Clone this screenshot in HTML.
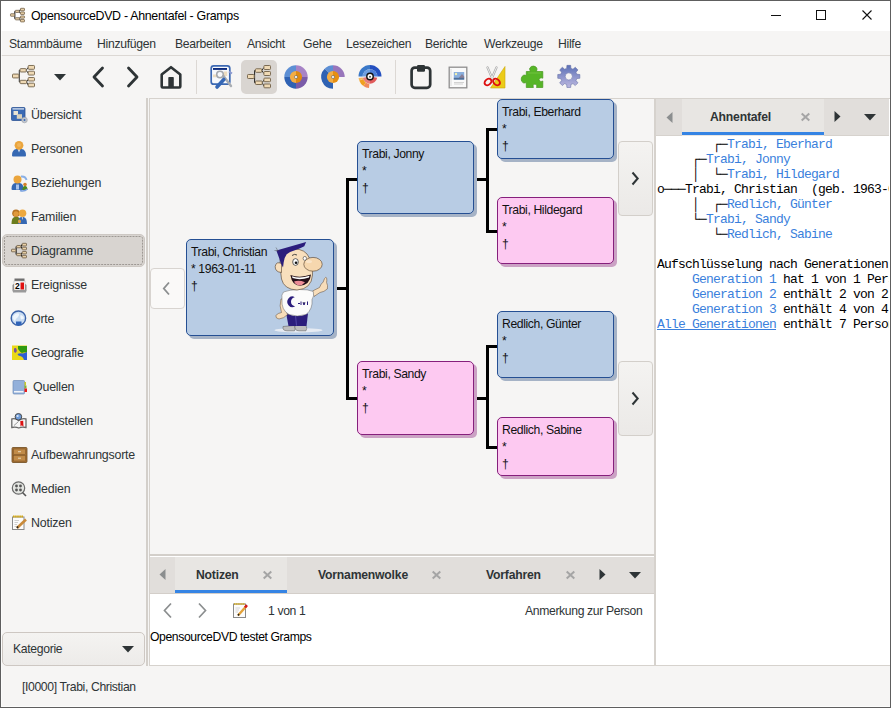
<!DOCTYPE html>
<html><head><meta charset="utf-8">
<style>
*{margin:0;padding:0;box-sizing:border-box}
html,body{width:891px;height:708px;overflow:hidden;background:#f6f5f4}
body{position:relative;font-family:"Liberation Sans",sans-serif;font-size:11.6px;color:#2e3436}
.a{position:absolute}
.t{position:absolute;white-space:pre;line-height:14px}
.hl{position:absolute;height:1px;background:#cdc7c2}
.vl{position:absolute;width:1px;background:#cdc7c2}
svg{position:absolute;overflow:visible}
.box{position:absolute;border-radius:5px;border:1.3px solid #254f93;background:#b8cce4;box-shadow:3px 3px 0 #a6b3c6}
.box.f{border-color:#861f7c;background:#fdc9f1;box-shadow:3px 3px 0 #cba2c4}
.box .t{color:#111;font-size:12.2px;letter-spacing:-0.38px;left:4px}
.mono{position:absolute;font-family:"Liberation Mono",monospace;font-size:13px;letter-spacing:-0.8px;white-space:pre;line-height:15px;color:#000;overflow:hidden}
.lk{color:#3a7fdc}
</style></head><body>
<!-- title bar -->
<div class="a" style="left:0;top:0;width:891px;height:31px;background:#fff"></div>
<div class="t" style="left:31px;top:9px;font-size:12.4px;letter-spacing:-0.3px;color:#000">OpensourceDVD - Ahnentafel - Gramps</div>
<!-- window controls -->
<div class="a" style="left:771px;top:15px;width:10px;height:1px;background:#111"></div>
<div class="a" style="left:816px;top:10px;width:10px;height:10px;border:1px solid #111"></div>
<svg style="left:862px;top:10px" width="10" height="10"><path d="M0.5 0.5L9.5 9.5M9.5 0.5L0.5 9.5" stroke="#111" stroke-width="1.1"/></svg>

<!-- menu bar -->
<div class="t" style="left:9px;top:37px;font-size:12.2px;letter-spacing:-0.3px">Stammbäume</div>
<div class="t" style="left:97px;top:37px;font-size:12.2px;letter-spacing:-0.3px">Hinzufügen</div>
<div class="t" style="left:175px;top:37px;font-size:12.2px;letter-spacing:-0.3px">Bearbeiten</div>
<div class="t" style="left:247px;top:37px;font-size:12.2px;letter-spacing:-0.3px">Ansicht</div>
<div class="t" style="left:303px;top:37px;font-size:12.2px;letter-spacing:-0.3px">Gehe</div>
<div class="t" style="left:346px;top:37px;font-size:12.2px;letter-spacing:-0.3px">Lesezeichen</div>
<div class="t" style="left:425px;top:37px;font-size:12.2px;letter-spacing:-0.3px">Berichte</div>
<div class="t" style="left:484px;top:37px;font-size:12.2px;letter-spacing:-0.3px">Werkzeuge</div>
<div class="t" style="left:558px;top:37px;font-size:12.2px;letter-spacing:-0.3px">Hilfe</div>
<div class="hl" style="left:1px;top:55px;width:889px;background:#dcd8d4"></div>

<!-- toolbar -->
<div class="vl" style="left:196px;top:60px;height:34px;background:#dcd8d4"></div>
<div class="vl" style="left:395px;top:60px;height:34px;background:#dcd8d4"></div>
<div class="a" style="left:241px;top:60px;width:36px;height:34px;border-radius:5px;background:#d9d5d1"></div>


<!-- title icon -->
<svg style="left:10px;top:8px" width="15" height="14" viewBox="0 0 24 23"><path d="M7.2 11.5H7.6M7.6 5.5V17.7M7.6 5.5H8.4M7.6 17.7H8.4M14.8 5.5L16.9 2.5M14.8 5.5L16.9 8.5M15.2 17.7L16.9 15M15.2 17.7L16.9 21" stroke="#111" stroke-width="1.7" fill="none"/><g fill="#e9d0a6" stroke="#7a6a52" stroke-width="1.4"><rect x="0.5" y="9.5" width="6.7" height="4" rx="0.8"/><rect x="8.4" y="3.8" width="6.4" height="3.5" rx="0.8"/><rect x="8.4" y="16" width="6.8" height="3.5" rx="0.8"/><rect x="16.9" y="0.5" width="6.6" height="4" rx="0.8"/><rect x="16.9" y="6.5" width="6.6" height="4" rx="0.8"/><rect x="16.9" y="13.1" width="6.6" height="3.6" rx="0.8"/><rect x="16.9" y="19" width="6.6" height="3.8" rx="0.8"/></g></svg>
<!-- toolbar icons -->
<svg style="left:12px;top:65px" width="23" height="22" viewBox="0 0 24 23"><path d="M7.2 11.5H7.6M7.6 5.5V17.7M7.6 5.5H8.4M7.6 17.7H8.4M14.8 5.5L16.9 2.5M14.8 5.5L16.9 8.5M15.2 17.7L16.9 15M15.2 17.7L16.9 21" stroke="#222" stroke-width="1" fill="none"/><g fill="#efd9b4" stroke="#7a6a52" stroke-width="1"><rect x="0.5" y="9.5" width="6.7" height="4" rx="0.8"/><rect x="8.4" y="3.8" width="6.4" height="3.5" rx="0.8"/><rect x="8.4" y="16" width="6.8" height="3.5" rx="0.8"/><rect x="16.9" y="0.5" width="6.6" height="4" rx="0.8"/><rect x="16.9" y="6.5" width="6.6" height="4" rx="0.8"/><rect x="16.9" y="13.1" width="6.6" height="3.6" rx="0.8"/><rect x="16.9" y="19" width="6.6" height="3.8" rx="0.8"/></g></svg>
<svg style="left:54px;top:74px" width="12" height="7"><path d="M0 0H12L6 6.5Z" fill="#2e3436"/></svg>
<svg style="left:90px;top:66px" width="15" height="22"><path d="M12.5 2L4 11L12.5 20" fill="none" stroke="#2e3436" stroke-width="2.8" stroke-linecap="round" stroke-linejoin="round"/></svg>
<svg style="left:126px;top:66px" width="15" height="22"><path d="M2.5 2L11 11L2.5 20" fill="none" stroke="#2e3436" stroke-width="2.8" stroke-linecap="round" stroke-linejoin="round"/></svg>
<svg style="left:160px;top:65px" width="23" height="25"><path d="M11 2.2L20.3 9.5V21.5Q20.3 22.5 19.3 22.5H2.7Q1.7 22.5 1.7 21.5V9.5Z" fill="none" stroke="#2e3436" stroke-width="2.6" stroke-linejoin="round"/><rect x="8.3" y="12" width="5.5" height="11" rx="0.8" fill="#2e3436"/></svg>
<svg style="left:207px;top:62px" width="30" height="30" viewBox="207 62 30 30"><rect x="211.2" y="65.8" width="18.6" height="18.4" rx="2.5" fill="#f7f9fc" stroke="#3d69b3" stroke-width="1.7"/><rect x="213" y="68" width="14" height="1.9" fill="#0b2a7e"/><rect x="213" y="74.5" width="3.5" height="2.8" fill="#ecdcc0"/><rect x="224" y="71.5" width="3.2" height="4.5" fill="#ecdcc0"/><path d="M223.5 76L231 86" stroke="#a9adb2" stroke-width="2.4" stroke-linecap="round"/><circle cx="220" cy="74.5" r="3.3" fill="none" stroke="#a5a9ae" stroke-width="1.6"/><path d="M217 87L223.8 79.5" stroke="#3567b5" stroke-width="3.6" stroke-linecap="round"/><path d="M229 71.5L232 73.5" stroke="#8c9ad0" stroke-width="2"/></svg>
<svg style="left:247px;top:65px" width="24" height="23" viewBox="0 0 24 23"><path d="M7.2 11.5H7.6M7.6 5.5V17.7M7.6 5.5H8.4M7.6 17.7H8.4M14.8 5.5L16.9 2.5M14.8 5.5L16.9 8.5M15.2 17.7L16.9 15M15.2 17.7L16.9 21" stroke="#222" stroke-width="1" fill="none"/><g fill="#efd9b4" stroke="#7a6a52" stroke-width="1"><rect x="0.5" y="9.5" width="6.7" height="4" rx="0.8"/><rect x="8.4" y="3.8" width="6.4" height="3.5" rx="0.8"/><rect x="8.4" y="16" width="6.8" height="3.5" rx="0.8"/><rect x="16.9" y="0.5" width="6.6" height="4" rx="0.8"/><rect x="16.9" y="6.5" width="6.6" height="4" rx="0.8"/><rect x="16.9" y="13.1" width="6.6" height="3.6" rx="0.8"/><rect x="16.9" y="19" width="6.6" height="3.8" rx="0.8"/></g></svg>
<!-- fan 1 -->
<svg style="left:284px;top:65px" width="24" height="24" viewBox="-12 -12 24 24">
<path d="M0 0V-11.7A11.7 11.7 0 0 0 -11.7 0Z" fill="#5d8fd4"/><path d="M0 0V-11.7A11.7 11.7 0 0 1 11.7 0Z" fill="#a783c6"/><path d="M0 0H-11.7A11.7 11.7 0 0 0 0 11.7Z" fill="#2f62b3"/><path d="M0 0H11.7A11.7 11.7 0 0 1 0 11.7Z" fill="#7a5ba8"/>
<path d="M0 -6.1A6.1 6.1 0 0 0 0 6.1Z" fill="#f3ad45"/><path d="M0 -6.1A6.1 6.1 0 0 1 0 6.1Z" fill="#df8a12"/><circle r="1.6" fill="#eee" stroke="#555" stroke-width="0.5"/></svg>
<!-- fan 2 -->
<svg style="left:321px;top:65px" width="24" height="24" viewBox="-12 -12 24 24">
<path d="M0 0V-11.7A11.7 11.7 0 0 0 -8.3 -8.3Z" fill="#5d8fd4"/><path d="M0 0L-8.3 -8.3A11.7 11.7 0 0 0 0 11.7Z" fill="#2f62b3"/><path d="M0 0V-11.7A11.7 11.7 0 0 1 11.7 0Z" fill="#9876bb"/>
<path d="M0 -6.1A6.1 6.1 0 0 0 0 6.1Z" fill="#f3ad45"/><path d="M0 -6.1A6.1 6.1 0 0 1 0 6.1Z" fill="#e68f12"/><circle r="1.6" fill="#eee" stroke="#555" stroke-width="0.5"/></svg>
<!-- fan 3 -->
<svg style="left:358px;top:65px" width="24" height="24" viewBox="-12 -11.5 24 24"><path d="M-7.30 0.00L-11.50 0.00A11.5 11.5 0 0 1 -0.00 -11.50L-0.00 -7.30A7.3 7.3 0 0 0 -7.30 0.00Z" fill="#3a78c8"/><path d="M-0.00 -7.30L-0.00 -11.50A11.5 11.5 0 0 1 11.50 -0.00L7.30 -0.00A7.3 7.3 0 0 0 -0.00 -7.30Z" fill="#2450c0"/><path d="M-3.00 0.00L-7.30 0.00A7.3 7.3 0 0 1 -0.00 -7.30L-0.00 -3.00A3 3 0 0 0 -3.00 0.00Z" fill="#6d9ee0"/><path d="M-0.00 -3.00L-0.00 -7.30A7.3 7.3 0 0 1 7.30 -0.00L3.00 -0.00A3 3 0 0 0 -0.00 -3.00Z" fill="#4f7fd8"/><path d="M2.95 0.52L7.19 1.27A7.3 7.3 0 0 1 0.00 7.30L0.00 3.00A3 3 0 0 0 2.95 0.52Z" fill="#e15b5b"/><path d="M0.00 3.00L0.00 7.30A7.3 7.3 0 0 1 -7.19 1.27L-2.95 0.52A3 3 0 0 0 0.00 3.00Z" fill="#e77d7d"/><path d="M-0.64 7.27L-1.00 11.46A11.5 11.5 0 0 1 -6.60 9.42L-4.19 5.98A7.3 7.3 0 0 0 -0.64 7.27Z" fill="#f08a5a"/><path d="M-4.19 5.98L-6.60 9.42A11.5 11.5 0 0 1 -10.81 3.93L-6.86 2.50A7.3 7.3 0 0 0 -4.19 5.98Z" fill="#f0a020"/><path d="M-6.86 2.50L-10.81 3.93A11.5 11.5 0 0 1 -11.39 1.60L-7.23 1.02A7.3 7.3 0 0 0 -6.86 2.50Z" fill="#f5b860"/><circle r="3.2" fill="#fff" stroke="#111" stroke-width="1.4"/><circle r="1" cy="0.2" fill="#555"/></svg>
<!-- clipboard -->
<svg style="left:409px;top:64px" width="24" height="26"><rect x="2.6" y="3.6" width="18.6" height="20.2" rx="3.2" fill="none" stroke="#2e3436" stroke-width="2.7"/><rect x="8" y="1" width="8" height="6.8" rx="1.2" fill="#2e3436"/></svg>
<!-- media -->
<svg style="left:448px;top:66px" width="20" height="23"><rect x="1.2" y="1.2" width="17.6" height="20.6" fill="#fafafa" stroke="#8f8f8f" stroke-width="1.3"/><rect x="5.8" y="6" width="10.4" height="7.6" fill="#8bb0de"/><path d="M11 11.5L14 8L16.2 10.5V12H11Z" fill="#8a8098"/><rect x="5.8" y="11.8" width="10.4" height="1.8" fill="#4f6f98"/><circle cx="8" cy="8" r="1.2" fill="#f4f2b0"/><path d="M6 16.5H16M6 18H15" stroke="#c8c8c8" stroke-width="0.8"/><path d="M3 3V20" stroke="#e4e4e4" stroke-width="1.5"/></svg>
<!-- scissors -->
<svg style="left:482px;top:65px" width="25" height="24"><path d="M8.5 23H23V1.5Z" fill="#eccb18" stroke="#c9a80a" stroke-width="0.6"/><path d="M5.5 2.5L10.5 14M14.5 2.5L9.5 14" stroke="#a9a9a9" stroke-width="2.2" stroke-linecap="round"/><path d="M5.5 2.5L10.5 14M14.5 2.5L9.5 14" stroke="#f4f4f4" stroke-width="0.9" stroke-linecap="round"/><ellipse cx="6" cy="17" rx="3.8" ry="2.8" transform="rotate(-40 6 17)" fill="none" stroke="#dd1010" stroke-width="1.9"/><ellipse cx="14.5" cy="17" rx="3.8" ry="2.8" transform="rotate(40 14.5 17)" fill="none" stroke="#dd1010" stroke-width="1.9"/></svg>
<!-- puzzle -->
<svg style="left:520px;top:65px" width="25" height="24"><path d="M6.3 6.5H10.5Q9.2 4.8 9.8 3Q11 1 13.4 1.1Q15.8 1.2 16.8 3Q17.4 4.8 16.3 6.5H22.8V13.2Q21 12.3 19.6 13.4Q18.5 14.5 19.6 16Q21 17 22.8 16V22.5H16.5Q17.3 20.8 16.4 19.7Q15 18.6 13.5 19.6Q12.6 20.6 13.4 22.5H6.3V17.6Q4.6 18.2 3.2 17.8Q1.2 16.8 1.2 14Q1.4 11.2 3.4 10.3Q4.8 9.8 6.3 10.5Z" fill="#56b527" stroke="#46961c" stroke-width="0.7"/><path d="M8 8H21" stroke="#7ccb4c" stroke-width="1.2" opacity="0.6"/></svg>
<!-- gear -->
<svg style="left:556px;top:64px" width="26" height="26" viewBox="-12.8 -12.4 26 26"><defs><linearGradient id="gg" x1="0" y1="0" x2="0" y2="1"><stop offset="0" stop-color="#5b70b6"/><stop offset="1" stop-color="#bdb8e0"/></linearGradient></defs>
<path d="M-3.18 -7.67L-2.13 -8.02L-1.89 -11.04L1.89 -11.04L2.13 -8.02L3.18 -7.67L4.16 -7.18L6.47 -9.15L9.15 -6.47L7.18 -4.16L7.67 -3.18L8.02 -2.13L11.04 -1.89L11.04 1.89L8.02 2.13L7.67 3.18L7.18 4.16L9.15 6.47L6.47 9.15L4.16 7.18L3.18 7.67L2.13 8.02L1.89 11.04L-1.89 11.04L-2.13 8.02L-3.18 7.67L-4.16 7.18L-6.47 9.15L-9.15 6.47L-7.18 4.16L-7.67 3.18L-8.02 2.13L-11.04 1.89L-11.04 -1.89L-8.02 -2.13L-7.67 -3.18L-7.18 -4.16L-9.15 -6.47L-6.47 -9.15L-4.16 -7.18Z" fill="url(#gg)" stroke="#6670a8" stroke-width="0.6"/>
<circle cx="0" cy="0" r="3.6" fill="#f6f5f4" stroke="#6a74ad" stroke-width="0.6"/></svg>

<!-- sidebar -->
<div class="a" style="left:2px;top:234px;width:143px;height:33px;border-radius:5px;background:#d8d4d0;border:1px solid #cdc8c3"></div>
<svg style="left:4px;top:236px" width="139" height="29"><rect x="0.5" y="0.5" width="138" height="28" rx="2" fill="none" stroke="#9d9893" stroke-width="1" stroke-dasharray="2 1"/></svg>
<div class="t" style="left:31px;top:108px;font-size:12.4px;letter-spacing:-0.2px">Übersicht</div>
<div class="t" style="left:31px;top:142px;font-size:12.4px;letter-spacing:-0.2px">Personen</div>
<div class="t" style="left:31px;top:176px;font-size:12.4px;letter-spacing:-0.2px">Beziehungen</div>
<div class="t" style="left:31px;top:210px;font-size:12.4px;letter-spacing:-0.2px">Familien</div>
<div class="t" style="left:31px;top:244px;font-size:12.4px;letter-spacing:-0.2px">Diagramme</div>
<div class="t" style="left:31px;top:278px;font-size:12.4px;letter-spacing:-0.2px">Ereignisse</div>
<div class="t" style="left:31px;top:312px;font-size:12.4px;letter-spacing:-0.2px">Orte</div>
<div class="t" style="left:31px;top:346px;font-size:12.4px;letter-spacing:-0.2px">Geografie</div>
<div class="t" style="left:33px;top:380px;font-size:12.4px;letter-spacing:-0.2px">Quellen</div>
<div class="t" style="left:31px;top:414px;font-size:12.4px;letter-spacing:-0.2px">Fundstellen</div>
<div class="t" style="left:31px;top:448px;font-size:12.4px;letter-spacing:-0.2px">Aufbewahrungsorte</div>
<div class="t" style="left:31px;top:482px;font-size:12.4px;letter-spacing:-0.2px">Medien</div>
<div class="t" style="left:31px;top:516px;font-size:12.4px;letter-spacing:-0.2px">Notizen</div>

<!-- sidebar icons (16x16 at x=11) -->
<svg style="left:11px;top:106px" width="17" height="18"><rect x="0.5" y="1.5" width="13.5" height="13" rx="1" fill="#3b6bb5" stroke="#2d5494" stroke-width="0.8"/><rect x="1.5" y="2.3" width="11.5" height="1.2" fill="#e4e9f1"/><rect x="2.5" y="5" width="4.5" height="4" fill="#e9e4d4"/><rect x="5.8" y="8.2" width="5.2" height="4.6" fill="#d9d2bd"/><circle cx="13.5" cy="14" r="2.8" fill="#c2c6cc" stroke="#9aa0a8" stroke-width="0.6"/><circle cx="13.5" cy="14" r="1" fill="#3b6bb5"/></svg>
<svg style="left:11px;top:140px" width="16" height="17"><path d="M1 15.5Q1 9.5 5.5 9H10.5Q15 9.5 15 15.5Q15 16.5 14 16.5H2Q1 16.5 1 15.5Z" fill="#3568b3"/><path d="M6.8 9.2L8 12.5L9.2 9.2Z" fill="#eaf0f8"/><circle cx="8" cy="5.3" r="4.4" fill="#eba53c"/><circle cx="8" cy="5" r="2" fill="#f4c070" opacity="0.6"/></svg>
<svg style="left:11px;top:174px" width="17" height="17"><path d="M0.5 15Q0.5 9.5 4.5 9H8.5Q12.5 9.5 12.5 15Q12.5 16 11.5 16H1.5Q0.5 16 0.5 15Z" fill="#3568b3"/><rect x="5" y="10.5" width="3" height="5" fill="#a9c3ea"/><circle cx="6.5" cy="5.5" r="4" fill="#eba53c"/><path d="M10 2.5Q14.5 2 15.5 6" fill="none" stroke="#8ab0e6" stroke-width="2"/><circle cx="14" cy="10.5" r="1.8" fill="#d5802a"/><path d="M11.5 16Q11.5 12 14 12Q16.5 12 16.5 16Z" fill="#4d8a1c"/><path d="M9 16.5Q13 18 16.5 15" fill="none" stroke="#7aa3e0" stroke-width="1.5"/></svg>
<svg style="left:11px;top:208px" width="17" height="17"><path d="M0.5 16Q0.5 9.5 3.5 9H7Q9.5 9.5 9.5 16Z" fill="#6b7d1e"/><circle cx="5" cy="5.2" r="3.8" fill="#b67424"/><circle cx="5" cy="5.8" r="2.6" fill="#e09a3c"/><path d="M7 16Q7 9.5 10 9H12.5Q16 9.5 16 16Z" fill="#3568b3"/><path d="M10.7 9.2L11.3 12L12 9.2Z" fill="#f0f0f0"/><circle cx="11.5" cy="5.2" r="3.8" fill="#eda83e"/><ellipse cx="8.5" cy="13.5" rx="1.5" ry="2" fill="#e8a040"/></svg>
<svg style="left:11px;top:243px" width="16" height="15" viewBox="0 0 24 23"><path d="M7.2 11.5H7.6M7.6 5.5V17.7M7.6 5.5H8.4M7.6 17.7H8.4M14.8 5.5L16.9 2.5M14.8 5.5L16.9 8.5M15.2 17.7L16.9 15M15.2 17.7L16.9 21" stroke="#111" stroke-width="1.7" fill="none"/><g fill="#e9d0a6" stroke="#7a6a52" stroke-width="1.4"><rect x="0.5" y="9.5" width="6.7" height="4" rx="0.8"/><rect x="8.4" y="3.8" width="6.4" height="3.5" rx="0.8"/><rect x="8.4" y="16" width="6.8" height="3.5" rx="0.8"/><rect x="16.9" y="0.5" width="6.6" height="4" rx="0.8"/><rect x="16.9" y="6.5" width="6.6" height="4" rx="0.8"/><rect x="16.9" y="13.1" width="6.6" height="3.6" rx="0.8"/><rect x="16.9" y="19" width="6.6" height="3.8" rx="0.8"/></g></svg>
<svg style="left:11px;top:276px" width="17" height="17"><rect x="1.5" y="8" width="14" height="8" rx="1.5" fill="#8a8a8a"/><rect x="3.5" y="2.5" width="10" height="3" fill="#6e6e6e"/><rect x="3" y="5" width="11" height="9" fill="#fbfbfb" stroke="#b0b0b0" stroke-width="0.5"/><text x="4" y="12.8" font-family="Liberation Sans" font-weight="bold" font-size="8.5" fill="#000">2</text><path d="M9.5 6.5H13V13.5H9.5Z" fill="#e01010"/><rect x="2" y="14" width="13" height="2.5" fill="#9a9a9a"/></svg>
<svg style="left:10px;top:310px" width="17" height="17"><circle cx="8.4" cy="8.2" r="7.2" fill="#c9dcf2" stroke="#3a62a8" stroke-width="1.4"/><path d="M3 6.5Q5 3 8.5 3.2Q10 5 8 7Q5.5 8.5 4.8 11.5Q2.5 9.5 3 6.5Z" fill="#eef5fc"/><path d="M10.5 5Q13.5 5.5 14 8.5L11 9.5Q10 7.5 10.5 5Z" fill="#f2f7fd"/><path d="M6 11.5H11.5V14.8Q8.5 16 6 14.8Z" fill="#2f63b8"/></svg>
<svg style="left:11px;top:344px" width="17" height="17"><rect x="1" y="1.5" width="15" height="14.5" fill="#e9d818"/><path d="M7 2H16V8.5Q12.5 8 11 9Q9 8 7 5Z" fill="#2f9a10"/><path d="M6.5 10Q8.5 9 12 9.5L16 8V16H13Q12 12.5 9 12Q7 12 6.5 10Z" fill="#2e5fd6"/><path d="M3 4.5Q5 3.5 5.5 5Q6.5 7 5 8.5Q4 9.5 3 7.5Z" fill="#7a4fa0"/></svg>
<svg style="left:11px;top:378px" width="17" height="17"><rect x="2" y="2.5" width="11.5" height="13.5" rx="1" fill="#93b0da" stroke="#6f8cb8" stroke-width="0.7"/><rect x="3" y="13" width="9.5" height="1.5" fill="#f2f4f8"/><path d="M13.5 4H15V7.5H13.5Z" fill="#c9cc2a"/><path d="M13.5 7.5H15.5V10.5H13.5Z" fill="#8ab030"/><path d="M13.5 10.5H16V14H13.5Z" fill="#e81c1c"/></svg>
<svg style="left:11px;top:412px" width="17" height="17"><path d="M0.8 15.5V7Q4.5 6 7.8 8.5Q11 6 15 7V15.5Q11 14.5 7.8 16Q4.5 14.5 0.8 15.5Z" fill="#f6f6f6" stroke="#6a6a6a" stroke-width="1.3"/><path d="M3 13.5L7.5 9.5" stroke="#9a9a9a" stroke-width="1"/><circle cx="7.4" cy="4.8" r="3.3" fill="#6c9ad8" stroke="#4a4a4a" stroke-width="1"/><circle cx="6.6" cy="4" r="1.1" fill="#d8e6f8"/><path d="M9.3 9L12.2 8.8L12.5 14.8L10.8 13.2L9.5 14.5Z" fill="#dc1010"/></svg>
<svg style="left:11px;top:446px" width="17" height="17"><rect x="1" y="1.5" width="15" height="15" rx="1" fill="#a87234" stroke="#6e4a1e" stroke-width="0.8"/><rect x="2.5" y="3" width="12" height="5.5" fill="#c18b48" stroke="#7a5224" stroke-width="0.5"/><rect x="2.5" y="9.5" width="12" height="5.5" fill="#c18b48" stroke="#7a5224" stroke-width="0.5"/><rect x="7" y="5.2" width="3" height="1" fill="#ead9b8"/><rect x="7" y="11.7" width="3" height="1" fill="#ead9b8"/></svg>
<svg style="left:11px;top:480px" width="17" height="17"><circle cx="7.5" cy="8" r="6.2" fill="#e4e6e2" stroke="#6a6a6a" stroke-width="1.2"/><circle cx="5.5" cy="6" r="1.4" fill="#555"/><circle cx="9.5" cy="6" r="1.4" fill="#555"/><circle cx="5.5" cy="10" r="1.4" fill="#555"/><circle cx="9.5" cy="10" r="1.4" fill="#555"/><path d="M11.5 12.5L15 16" stroke="#555" stroke-width="1.6"/></svg>
<svg style="left:11px;top:514px" width="17" height="17"><rect x="1.5" y="3" width="11.5" height="12.5" fill="#fcfcfc" stroke="#8a8a8a" stroke-width="1"/><path d="M3.5 6.5H8M3.5 8.5H7M3.5 10.5H6M3.5 12.5H6" stroke="#b0b0b0" stroke-width="0.6"/><path d="M2 2.5H12.5" stroke="#d4a810" stroke-width="2.2" stroke-dasharray="1.6 0.5"/><path d="M6 14L15 5.5" stroke="#c98a3a" stroke-width="2.6"/><path d="M6 14L7 12.5" stroke="#222" stroke-width="1.5"/></svg>

<!-- Kategorie -->
<div class="a" style="left:2px;top:632px;width:143px;height:34px;border-radius:5px;border:1px solid #cdc7c2;background:linear-gradient(#f4f3f1,#edebe9)"></div>
<div class="t" style="left:13px;top:642px;font-size:12.2px;letter-spacing:-0.33px">Kategorie</div>
<svg style="left:122px;top:646px" width="12" height="7"><path d="M0 0H12L6 6.5Z" fill="#2e3436"/></svg>

<!-- pane handles -->
<div class="a" style="left:146px;top:98px;width:2px;height:568px;background:#d3cfca"></div>

<!-- chart frame -->
<div class="a" style="left:149px;top:98px;width:506px;height:456px;border-left:1px solid #d6d2cd;border-top:1px solid #d6d2cd;border-right:1px solid #d6d2cd"></div>
<div class="a" style="left:149px;top:554px;width:506px;height:2px;background:#d3cfca"></div>


<!-- chart content -->
<div class="a" style="left:150px;top:99px;width:504px;height:455px;overflow:hidden">
<div class="a" style="left:-150px;top:-99px;width:891px;height:708px">
<!-- connectors -->
<div class="a" style="left:337px;top:287px;width:11px;height:3px;background:#000"></div>
<div class="a" style="left:346px;top:178px;width:3px;height:222px;background:#000"></div>
<div class="a" style="left:346px;top:178px;width:11px;height:3px;background:#000"></div>
<div class="a" style="left:346px;top:397px;width:11px;height:3px;background:#000"></div>
<div class="a" style="left:477px;top:178px;width:11px;height:3px;background:#000"></div>
<div class="a" style="left:486px;top:128px;width:3px;height:105px;background:#000"></div>
<div class="a" style="left:486px;top:128px;width:11px;height:3px;background:#000"></div>
<div class="a" style="left:486px;top:230px;width:11px;height:3px;background:#000"></div>
<div class="a" style="left:477px;top:397px;width:11px;height:3px;background:#000"></div>
<div class="a" style="left:486px;top:345px;width:3px;height:104px;background:#000"></div>
<div class="a" style="left:486px;top:345px;width:11px;height:3px;background:#000"></div>
<div class="a" style="left:486px;top:446px;width:11px;height:3px;background:#000"></div>
<!-- boxes -->
<div class="box" style="left:186px;top:239px;width:148px;height:97px">
 <div class="t" style="top:5px">Trabi, Christian</div>
 <div class="t" style="top:22px">* 1963-01-11</div>
 <div class="t" style="top:39px">†</div>
</div>
<div class="box" style="left:357px;top:141px;width:117px;height:73px">
 <div class="t" style="top:5px">Trabi, Jonny</div><div class="t" style="top:22px">*</div><div class="t" style="top:39px">†</div>
</div>
<div class="box f" style="left:357px;top:361px;width:117px;height:74px">
 <div class="t" style="top:5px">Trabi, Sandy</div><div class="t" style="top:22px">*</div><div class="t" style="top:39px">†</div>
</div>
<div class="box" style="left:497px;top:99px;width:117px;height:60px">
 <div class="t" style="top:5px">Trabi, Eberhard</div><div class="t" style="top:22px">*</div><div class="t" style="top:39px">†</div>
</div>
<div class="box f" style="left:497px;top:197px;width:117px;height:67px">
 <div class="t" style="top:5px">Trabi, Hildegard</div><div class="t" style="top:22px">*</div><div class="t" style="top:39px">†</div>
</div>
<div class="box" style="left:497px;top:311px;width:117px;height:67px">
 <div class="t" style="top:5px">Redlich, Günter</div><div class="t" style="top:22px">*</div><div class="t" style="top:39px">†</div>
</div>
<div class="box f" style="left:497px;top:417px;width:117px;height:59px">
 <div class="t" style="top:5px">Redlich, Sabine</div><div class="t" style="top:22px">*</div><div class="t" style="top:39px">†</div>
</div>

<!-- mascot -->
<svg style="left:270px;top:238px" width="65" height="98" viewBox="270 238 65 98">
<ellipse cx="298.5" cy="330.2" rx="24" ry="2.2" fill="#e6ebf3"/>
<path d="M283 326.5Q282.3 330.8 287 330.8H294.5Q296 328.5 294.5 325.5Z" fill="#bdbdbd" stroke="#555" stroke-width="0.5"/>
<path d="M295 325.5Q294.2 330.8 299 330.8H306Q307.5 328.5 306 325.5Z" fill="#bdbdbd" stroke="#555" stroke-width="0.5"/>
<path d="M286.2 313.5L288.5 326H306.5L308 313.5Z" fill="#2b1d7c"/>
<path d="M295.5 315.5L296.5 325.5" stroke="#5a4fb0" stroke-width="0.8"/>
<path d="M281 299Q279 306 281.5 312.5Q278 313 275.8 315.5Q275.5 318.5 279 319Q284 318.5 287.5 314.5Q284.5 309 284 299Z" fill="#f7ddba" stroke="#5c4430" stroke-width="0.5"/>
<path d="M312.5 291L319.5 287.5Q321 283.5 323.2 282Q324.5 277.5 325.8 277.3Q327.3 277.6 326.6 282.5Q328.2 285.5 327.3 289Q324 292 320 292.5L314 296.5Z" fill="#f7ddba" stroke="#5c4430" stroke-width="0.5"/>
<path d="M283.5 292Q289 289.8 299 289.5Q308 289.2 313.3 291.5Q314.5 296 312 299.5Q313 309 306 314.5Q297 317.5 289 314.5Q281 310 282 299Q281 295 283.5 292Z" fill="#fbfbfb" stroke="#666" stroke-width="0.5"/>
<path d="M294.8 297.2A5 5.3 0 1 0 295.2 306.2A4 4.5 0 1 1 294.8 297.2Z" fill="#2b1d7c"/>
<path d="M298 303.5H300M301 301.5V305M303 302.5L304 305L305 302.5M307.5 301.5V305" stroke="#2b1d7c" stroke-width="1"/>
<path d="M280 266Q279 252 288 250Q301 247 307 254Q313 262 312.5 275Q311.5 289 297 290Q284 289.5 281.5 279Z" fill="#f8dfbd" stroke="#4f3a28" stroke-width="0.6"/>
<path d="M281.5 263.5Q276 261 275.2 266.5Q275 272 281.5 272.5Z" fill="#f8dfbd" stroke="#4f3a28" stroke-width="0.6"/>
<ellipse cx="313" cy="264.3" rx="9.2" ry="6.9" fill="#f6d7ae" stroke="#4f3a28" stroke-width="0.6"/>
<ellipse cx="309" cy="261.5" rx="3" ry="1.6" fill="#fcebd6" opacity="0.7"/>
<ellipse cx="295.5" cy="262" rx="2.8" ry="3.4" fill="#fff" stroke="#222" stroke-width="0.7"/>
<circle cx="296" cy="262.7" r="1.3" fill="#111"/>
<ellipse cx="304.8" cy="258.4" rx="1.7" ry="2" fill="#fff" stroke="#222" stroke-width="0.5"/>
<path d="M292 255.5Q294.5 253.5 297 255" fill="none" stroke="#222" stroke-width="0.8"/>
<path d="M290.4 275Q300 278.5 311 274.5Q310 285 300 285.7Q292 285.5 290.4 275Z" fill="#241019"/>
<path d="M292 276.2Q300 279 309.5 275.7L309 277.5Q300 280.5 292.5 278Z" fill="#fff"/>
<path d="M294 281.5Q299 279.8 305 282.2Q302 285.7 299 285.5Q295.5 285 294 281.5Z" fill="#ec8c96"/>
<path d="M276.4 250.5L306.1 242L304.3 246.3Q300 248.5 296.2 249.7Q290 251.5 286.7 254.2Q284 258 283.7 262.2L283 267.4Q280.5 264 279.3 258.6Z" fill="#2b1d7c"/>
<path d="M276 247.5L278 251M274.5 250.5L278.5 250.8" stroke="#555" stroke-width="0.5"/>
</svg>

<!-- nav buttons -->
<div class="a" style="left:150px;top:268px;width:35px;height:41px;border:1px solid #d8d4d0;border-radius:4px;background:#faf9f8"></div>
<svg style="left:162px;top:281px" width="9" height="15"><path d="M7 1.5L1.8 7.5L7 13.5" fill="none" stroke="#8b8e8f" stroke-width="1.8"/></svg>
<div class="a" style="left:618px;top:141px;width:35px;height:75px;border:1px solid #d3cfca;border-radius:4px;background:linear-gradient(#f4f3f1,#ebe9e7)"></div>
<svg style="left:631px;top:171px" width="9" height="15"><path d="M1.5 1.5L6.7 7.5L1.5 13.5" fill="none" stroke="#2e3436" stroke-width="2"/></svg>
<div class="a" style="left:618px;top:361px;width:35px;height:75px;border:1px solid #d3cfca;border-radius:4px;background:linear-gradient(#f4f3f1,#ebe9e7)"></div>
<svg style="left:631px;top:391px" width="9" height="15"><path d="M1.5 1.5L6.7 7.5L1.5 13.5" fill="none" stroke="#2e3436" stroke-width="2"/></svg>
</div></div>

<!-- bottom gramplet -->
<div class="a" style="left:149px;top:556px;width:506px;height:110px;border:1px solid #d6d2cd;border-top:none;background:#fff"></div>
<div class="a" style="left:150px;top:557px;width:504px;height:37px;background:#e1dedb;border-bottom:1px solid #d3cec9"></div>
<div class="a" style="left:175px;top:557px;width:112px;height:36px;background:#e8e6e3"></div>
<div class="a" style="left:175px;top:590px;width:112px;height:3px;background:#3584e4"></div>
<div class="t" style="left:196px;top:568px;font-weight:bold;font-size:12.2px;letter-spacing:-0.2px;color:#2e3436">Notizen</div>
<div class="t" style="left:318px;top:568px;font-weight:bold;font-size:12.2px;letter-spacing:-0.2px;color:#2e3436">Vornamenwolke</div>
<div class="t" style="left:486px;top:568px;font-weight:bold;font-size:12.2px;letter-spacing:-0.2px;color:#2e3436">Vorfahren</div>
<div class="t" style="left:268px;top:604px;font-size:12.2px;letter-spacing:-0.37px">1 von 1</div>
<div class="t" style="left:525px;top:604px;font-size:12.2px;letter-spacing:-0.36px">Anmerkung zur Person</div>
<div class="t" style="left:150px;top:630px;color:#000;font-size:12.2px;letter-spacing:-0.39px">OpensourceDVD testet Gramps</div>


<!-- bottom gramplet icons -->
<svg style="left:159px;top:569px" width="7" height="11"><path d="M6.5 0V11L0.5 5.5Z" fill="#8b8e8f"/></svg>
<svg style="left:263px;top:571px" width="9" height="8"><path d="M0.7 0.5L8.3 7.5M8.3 0.5L0.7 7.5" stroke="#a5a5a5" stroke-width="2"/></svg>
<svg style="left:432px;top:571px" width="9" height="8"><path d="M0.7 0.5L8.3 7.5M8.3 0.5L0.7 7.5" stroke="#a5a5a5" stroke-width="2"/></svg>
<svg style="left:566px;top:571px" width="9" height="8"><path d="M0.7 0.5L8.3 7.5M8.3 0.5L0.7 7.5" stroke="#a5a5a5" stroke-width="2"/></svg>
<svg style="left:599px;top:569px" width="7" height="11"><path d="M0.5 0V11L6.5 5.5Z" fill="#2e3436"/></svg>
<svg style="left:629px;top:572px" width="12" height="7"><path d="M0 0H12L6 6.5Z" fill="#2e3436"/></svg>
<svg style="left:162px;top:602px" width="11" height="17"><path d="M9 1.5L2.5 8.5L9 15.5" fill="none" stroke="#8b8e8f" stroke-width="1.7"/></svg>
<svg style="left:197px;top:602px" width="11" height="17"><path d="M2 1.5L8.5 8.5L2 15.5" fill="none" stroke="#8b8e8f" stroke-width="1.7"/></svg>
<svg style="left:232px;top:602px" width="17" height="17"><rect x="1.5" y="2" width="12" height="13.5" fill="#fcfcfc" stroke="#8a8a8a" stroke-width="1"/><path d="M2 2H13" stroke="#d4a810" stroke-width="1.6" stroke-dasharray="1.5 0.6"/><path d="M3.5 6H8M3.5 8H7M3.5 10H6" stroke="#b8b8b8" stroke-width="0.6"/><path d="M6 13.5L14 4.5" stroke="#e3a23a" stroke-width="2.4"/><path d="M13 5.5L15 3.2" stroke="#d51a1a" stroke-width="2.6"/><path d="M6 13.5L7 12" stroke="#222" stroke-width="1.4"/></svg>

<!-- right panel -->
<div class="a" style="left:655px;top:98px;width:235px;height:568px;border:1px solid #d6d2cd;border-right:none;background:#fff"></div>
<div class="a" style="left:656px;top:99px;width:233px;height:37px;background:#e1dedb;border-bottom:1px solid #d6d2cd"></div>
<div class="a" style="left:682px;top:99px;width:142px;height:37px;background:#e8e6e3"></div>
<div class="a" style="left:682px;top:132px;width:142px;height:3px;background:#3584e4"></div>
<div class="t" style="left:710px;top:110px;font-weight:bold;font-size:12.2px;letter-spacing:-0.2px;color:#2e3436">Ahnentafel</div>


<!-- right panel tabs icons -->
<svg style="left:666px;top:112px" width="7" height="11"><path d="M6.5 0V11L0.5 5.5Z" fill="#8b8e8f"/></svg>
<svg style="left:801px;top:113px" width="9" height="8"><path d="M0.7 0.5L8.3 7.5M8.3 0.5L0.7 7.5" stroke="#a5a5a5" stroke-width="2"/></svg>
<svg style="left:834px;top:111px" width="7" height="11"><path d="M0.5 0V11L6.5 5.5Z" fill="#2e3436"/></svg>
<svg style="left:864px;top:114px" width="12" height="7"><path d="M0 0H12L6 6.5Z" fill="#2e3436"/></svg>
<!-- right panel text -->
<div class="mono" style="left:657px;top:137px;width:232px;height:210px"><span>        ┌─</span><span class="lk">Trabi, Eberhard</span>
     ┌─<span class="lk">Trabi, Jonny</span>
     │  └─<span class="lk">Trabi, Hildegard</span>
o───Trabi, Christian  (geb. 1963-01-11)
     │  ┌─<span class="lk">Redlich, Günter</span>
     └─<span class="lk">Trabi, Sandy</span>
        └─<span class="lk">Redlich, Sabine</span>

Aufschlüsselung nach Generationen
     <span class="lk">Generation 1</span> hat 1 von 1 Personen
     <span class="lk">Generation 2</span> enthält 2 von 2
     <span class="lk">Generation 3</span> enthält 4 von 4
<span class="lk" style="text-decoration:underline">Alle Generationen</span> enthält 7 Personen</div>

<!-- status bar -->
<div class="t" style="left:22px;top:680px;font-size:12.2px;letter-spacing:-0.37px">[I0000] Trabi, Christian</div>

<!-- window border -->
<div class="a" style="left:0;top:0;width:891px;height:708px;border:1px solid #5e5e5e"></div><div class="a" style="left:1px;top:1px;width:889px;height:706px;border:1px solid #fff;border-top:none;border-right:none;opacity:.7"></div>
</body></html>
